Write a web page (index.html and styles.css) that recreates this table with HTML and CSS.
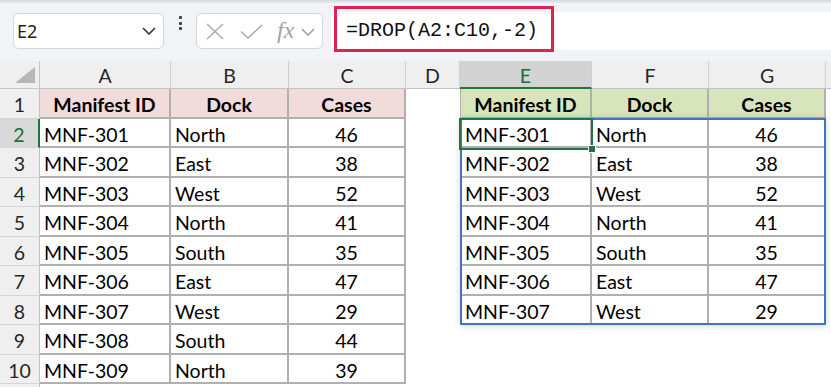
FILE: index.html
```html
<!DOCTYPE html>
<html>
<head>
<meta charset="utf-8">
<link rel="stylesheet" href="styles.css">
</head>
<body>
<div class="app">
  <div class="topstrip"></div>
  <div class="toolbar">
    <div class="namebox">
      <span class="nb-text">E2</span>
      <svg class="nb-chev" width="14" height="8" viewBox="0 0 14 8"><path d="M1 1 L7 7 L13 1" fill="none" stroke="#333" stroke-width="1.6"/></svg>
    </div>
    <div class="dots"><i></i><i></i><i></i></div>
    <div class="fxbox">
      <svg class="ic-x" width="18" height="17" viewBox="0 0 18 17"><path d="M1 1 L17 16 M17 1 L1 16" fill="none" stroke="#a8a8a8" stroke-width="1.4"/></svg>
      <svg class="ic-check" width="23" height="15" viewBox="0 0 23 15"><path d="M1 7.5 L8 14 L22 1" fill="none" stroke="#a8a8a8" stroke-width="1.4"/></svg>
      <span class="fx">fx</span>
      <svg class="fx-chev" width="14" height="8" viewBox="0 0 14 8"><path d="M1 1 L7 7 L13 1" fill="none" stroke="#9a9a9a" stroke-width="1.5"/></svg>
    </div>
    <div class="formula">
      <div class="formula-hl">=DROP(A2:C10,-2)</div>
    </div>
  </div>

  <div class="sheet">
    <div class="cells">
      <!-- header row -->
      <div class="corner"><svg width="40" height="28" viewBox="0 0 40 28"><path d="M15 22 L35 22 L35 6 Z" fill="#b7b7b7"/></svg></div>
      <div class="ch">A</div>
      <div class="ch">B</div>
      <div class="ch">C</div>
      <div class="ch">D</div>
      <div class="ch sel">E</div>
      <div class="ch">F</div>
      <div class="ch">G</div>
      <div class="ch last"></div>

      <!-- row 1 -->
      <div class="rh">1</div>
      <div class="c lt lh">Manifest ID</div>
      <div class="c lt lh">Dock</div>
      <div class="c lt lh">Cases</div>
      <div class="c"></div>
      <div class="c rt rf rhd">Manifest ID</div>
      <div class="c rt rhd">Dock</div>
      <div class="c rt rhd">Cases</div>
      <div class="c"></div>

      <!-- row 2 -->
      <div class="rh sel">2</div>
      <div class="c lt">MNF-301</div>
      <div class="c lt">North</div>
      <div class="c lt num">46</div>
      <div class="c"></div>
      <div class="c rt rf">MNF-301</div>
      <div class="c rt">North</div>
      <div class="c rt num">46</div>
      <div class="c"></div>

      <!-- row 3 -->
      <div class="rh">3</div>
      <div class="c lt">MNF-302</div>
      <div class="c lt">East</div>
      <div class="c lt num">38</div>
      <div class="c"></div>
      <div class="c rt rf">MNF-302</div>
      <div class="c rt">East</div>
      <div class="c rt num">38</div>
      <div class="c"></div>

      <!-- row 4 -->
      <div class="rh">4</div>
      <div class="c lt">MNF-303</div>
      <div class="c lt">West</div>
      <div class="c lt num">52</div>
      <div class="c"></div>
      <div class="c rt rf">MNF-303</div>
      <div class="c rt">West</div>
      <div class="c rt num">52</div>
      <div class="c"></div>

      <!-- row 5 -->
      <div class="rh">5</div>
      <div class="c lt">MNF-304</div>
      <div class="c lt">North</div>
      <div class="c lt num">41</div>
      <div class="c"></div>
      <div class="c rt rf">MNF-304</div>
      <div class="c rt">North</div>
      <div class="c rt num">41</div>
      <div class="c"></div>

      <!-- row 6 -->
      <div class="rh">6</div>
      <div class="c lt">MNF-305</div>
      <div class="c lt">South</div>
      <div class="c lt num">35</div>
      <div class="c"></div>
      <div class="c rt rf">MNF-305</div>
      <div class="c rt">South</div>
      <div class="c rt num">35</div>
      <div class="c"></div>

      <!-- row 7 -->
      <div class="rh">7</div>
      <div class="c lt">MNF-306</div>
      <div class="c lt">East</div>
      <div class="c lt num">47</div>
      <div class="c"></div>
      <div class="c rt rf">MNF-306</div>
      <div class="c rt">East</div>
      <div class="c rt num">47</div>
      <div class="c"></div>

      <!-- row 8 -->
      <div class="rh">8</div>
      <div class="c lt">MNF-307</div>
      <div class="c lt">West</div>
      <div class="c lt num">29</div>
      <div class="c"></div>
      <div class="c rt rf">MNF-307</div>
      <div class="c rt">West</div>
      <div class="c rt num">29</div>
      <div class="c"></div>

      <!-- row 9 -->
      <div class="rh">9</div>
      <div class="c lt">MNF-308</div>
      <div class="c lt">South</div>
      <div class="c lt num">44</div>
      <div class="c"></div>
      <div class="c"></div>
      <div class="c"></div>
      <div class="c"></div>
      <div class="c"></div>

      <!-- row 10 -->
      <div class="rh">10</div>
      <div class="c lt">MNF-309</div>
      <div class="c lt">North</div>
      <div class="c lt num">39</div>
      <div class="c"></div>
      <div class="c"></div>
      <div class="c"></div>
      <div class="c"></div>
      <div class="c"></div>

      <!-- row 11 (only a sliver visible) -->
      <div class="rh"></div>
    </div>

    <!-- selection layer drawn over the cells, same grid -->
    <div class="overlay">
      <div class="spill"></div>
      <div class="active"><span class="handle"></span></div>
    </div>
  </div>
</div>
</body>
</html>
```

FILE: styles.css
```css
* { box-sizing: border-box; }
html, body { margin: 0; padding: 0; }
body {
  width: 831px;
  height: 387px;
  overflow: hidden;
  background: #ffffff;
  font-family: "Lato", "Liberation Sans", sans-serif;
}
.app { width: 831px; height: 387px; overflow: hidden; }

.topstrip {
  height: 3px;
  background: linear-gradient(#d6d9de, #e6e9ed);
}
.toolbar {
  height: 58px;
  background: #f1f3f6;
  display: flex;
  align-items: flex-start;
}
.namebox {
  margin-top: 10px;
  margin-left: 13px;
  width: 151px;
  height: 36px;
  background: #fff;
  border: 1px solid #d3d6db;
  border-radius: 6px;
  display: flex;
  align-items: center;
  justify-content: space-between;
  padding: 0 7px 0 3px;
}
.nb-text {
  font-family: "Noto Sans", "Open Sans", sans-serif;
  font-size: 18px;
  color: #1f1f1f;
}
.dots {
  margin-top: 13px;
  margin-left: 14px;
  width: 4px;
  height: 14px;
  display: flex;
  flex-direction: column;
  justify-content: space-between;
  align-items: center;
}
.dots i {
  display: block;
  width: 3px;
  height: 3px;
  border-radius: 1px;
  background: #3c3c3c;
}
.fxbox {
  margin-top: 10px;
  margin-left: 14px;
  width: 127px;
  height: 36px;
  background: #fff;
  border: 1px solid #d3d6db;
  border-radius: 6px;
  display: flex;
  align-items: center;
  padding-left: 9px;
}
.ic-x { margin-top: 1px; }
.ic-check { margin-left: 16px; margin-top: 1px; }
.fx {
  margin-left: 14px;
  font-family: "Liberation Serif", serif;
  font-style: italic;
  font-size: 24px;
  color: #a3a3a3;
  line-height: 1;
  margin-top: -2px;
}
.fx-chev { margin-left: 7px; margin-top: 2px; }
.formula {
  margin-top: 9px;
  margin-left: 8px;
  flex: 1;
  height: 38px;
  background: #fff;
  padding-left: 3px;
}
.formula-hl {
  margin-top: -6px;
  width: 220px;
  height: 46px;
  border: 3px solid #e0234e;
  font-family: "Liberation Mono", "DejaVu Sans Mono", monospace;
  font-size: 20px;
  color: #111;
  display: flex;
  align-items: center;
  padding: 3px 0 0 9px;
}

.sheet {
  position: relative;
  height: 326px;
  overflow: hidden;
  background: #fff;
}
.cells, .overlay {
  display: grid;
  grid-template-columns: 40px 131px 118px 117px 54px 132px 117px 117px 1fr;
  grid-template-rows: 28px 30px 29px 30px 29px 30px 29px 30px 29px 30px 29px 29px;
  height: 326px;
}
.overlay {
  position: absolute;
  inset: 0;
  pointer-events: none;
}
.corner {
  background: #efefef;
  border-right: 1px solid #c6c6c6;
  border-bottom: 1px solid #c6c6c6;
}
.corner svg { display: block; }
.ch {
  background: #efefef;
  border-right: 1px solid #d0d0d0;
  border-bottom: 1px solid #c2c2c2;
  display: flex;
  align-items: center;
  justify-content: center;
  padding-top: 2px;
  font-size: 19.5px;
  color: #262626;
}
.ch.sel {
  background: #d3d3d3;
  color: #1e6b40;
  border-bottom: 2px solid #217346;
}
.ch.last { border-right: none; }
.rh {
  grid-column: 1;
  background: #efefef;
  border-right: 1px solid #c2c2c2;
  border-bottom: 1px solid #d4d4d4;
  display: flex;
  align-items: center;
  justify-content: center;
  padding-top: 2px;
  font-size: 19.5px;
  color: #262626;
}
.rh.sel {
  background: #d9d9d9;
  color: #1e6b40;
  border-right: 2px solid #217346;
}
.c {
  display: flex;
  align-items: center;
  padding: 3px 0 0 4px;
  font-size: 19.5px;
  color: #000;
  white-space: nowrap;
  overflow: hidden;
}
.lt, .rt {
  border-right: 2px solid #b0b0b0;
  border-bottom: 2px solid #b0b0b0;
}
.rf { border-left: 1px solid #b0b0b0; }
.num { justify-content: center; padding-left: 0; }
.lh {
  background: #f2dcdb;
  font-weight: 700;
  justify-content: center;
  padding-left: 0;
}
.rhd {
  background: #d8e4bc;
  font-weight: 700;
  justify-content: center;
  padding-left: 0;
}

.spill {
  grid-column: 6 / 9;
  grid-row: 3 / 10;
  margin-top: -1px;
  border: 2px solid #4472c4;
  box-shadow: 0 1px 7px rgba(0, 0, 0, 0.16);
}
.active {
  grid-column: 6 / 7;
  grid-row: 3 / 4;
  margin: -1px -1px -2px -1px;
  border: 2px solid #217346;
  position: relative;
}
.handle {
  position: absolute;
  right: -5px;
  bottom: -5px;
  width: 8px;
  height: 8px;
  background: #217346;
  border: 1px solid #fff;
}
```
